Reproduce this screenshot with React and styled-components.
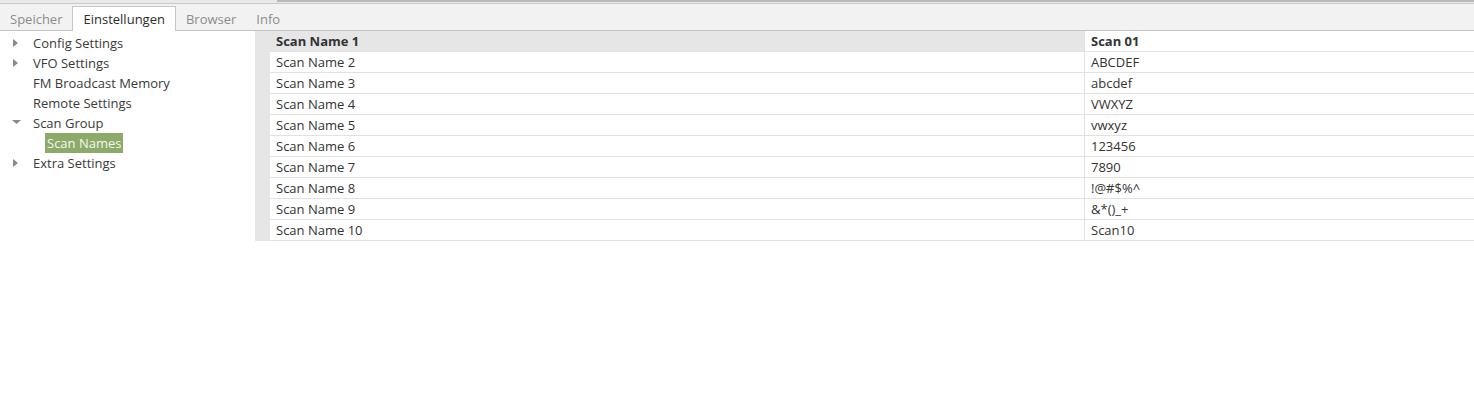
import React from 'react';
import styled, { createGlobalStyle } from 'styled-components';

const GlobalStyle = createGlobalStyle`
  html, body {
    margin: 0;
    padding: 0;
    background: #ffffff;
  }
  body {
    font-family: 'Open Sans', 'Liberation Sans', sans-serif;
    font-size: 13px;
    color: #3c3c3c;
  }
`;

const tabs = ['Speicher', 'Einstellungen', 'Browser', 'Info'];

const tree = [
  { label: 'Config Settings', arrow: 'right' },
  { label: 'VFO Settings', arrow: 'right' },
  { label: 'FM Broadcast Memory' },
  { label: 'Remote Settings' },
  { label: 'Scan Group', arrow: 'down' },
  { label: 'Scan Names', child: true, selected: true },
  { label: 'Extra Settings', arrow: 'right' },
];

const rows = [
  ['Scan Name 1', 'Scan 01'],
  ['Scan Name 2', 'ABCDEF'],
  ['Scan Name 3', 'abcdef'],
  ['Scan Name 4', 'VWXYZ'],
  ['Scan Name 5', 'vwxyz'],
  ['Scan Name 6', '123456'],
  ['Scan Name 7', '7890'],
  ['Scan Name 8', '!@#$%^'],
  ['Scan Name 9', '&*()_+'],
  ['Scan Name 10', 'Scan10'],
];

const Arrow = ({ dir }) => (
  <StArrow>
    {dir === 'right' && (
      <svg width='8' height='10' viewBox='0 0 8 10'>
        <path d='M1 1 L6 5 L1 9 Z' fill='#8a8a8a' />
      </svg>
    )}
    {dir === 'down' && (
      <svg width='10' height='8' viewBox='0 0 10 8'>
        <path d='M0 1 L9 1 L4.5 5 Z' fill='#8a8a8a' />
      </svg>
    )}
  </StArrow>
);

const App = () => {
  return (
    <>
      <GlobalStyle />
      <StWindow>
        <StTopStrip>
          <StStripHandle />
        </StTopStrip>
        <StTabBar>
          {tabs.map((t) => (
            <StTab key={t} $active={t === 'Einstellungen'}>
              {t}
            </StTab>
          ))}
        </StTabBar>
        <StBody>
          <StTree>
            {tree.map((item) => (
              <StTreeRow key={item.label} $child={item.child}>
                {!item.child && <Arrow dir={item.arrow} />}
                <StTreeLabel $selected={item.selected}>{item.label}</StTreeLabel>
              </StTreeRow>
            ))}
          </StTree>
          <StTable>
            {rows.map(([name, value], i) => (
              <StRow key={name}>
                <StRowHeader />
                <StCell $current={i === 0} $bold={i === 0} $width='814px'>
                  {name}
                </StCell>
                <StCell $bold={i === 0} $divider>
                  {value}
                </StCell>
              </StRow>
            ))}
          </StTable>
        </StBody>
      </StWindow>
    </>
  );
};

export default App;

const StWindow = styled.div`
  width: 1474px;
  height: 405px;
  background: #ffffff;
`;

const StTopStrip = styled.div`
  height: 3px;
  background: #e9e9e9;
  display: flex;
  justify-content: flex-end;
`;

const StStripHandle = styled.div`
  width: 1197px;
  height: 2px;
  background: #b9b9b9;
`;

const StTabBar = styled.div`
  height: 26px;
  display: flex;
  align-items: flex-end;
  background: #f2f2f2;
  border-top: 1px solid #c9c9c9;
  border-bottom: 1px solid #c2c2c2;
`;

const StTab = styled.div`
  height: ${({ $active }) => ($active ? '25px' : '24px')};
  margin-bottom: ${({ $active }) => ($active ? '-1px' : '0')};
  padding: 0 ${({ $active }) => ($active ? '10px' : '9px')};
  display: flex;
  align-items: center;
  box-sizing: border-box;
  color: ${({ $active }) => ($active ? '#2e2e2e' : '#8c8c8c')};
  background: ${({ $active }) => ($active ? '#ffffff' : 'transparent')};
  border: 1px solid ${({ $active }) => ($active ? '#c6c6c6' : 'transparent')};
  border-bottom: none;
`;

const StBody = styled.div`
  display: flex;
`;

const StTree = styled.div`
  width: 255px;
  padding-top: 2px;
`;

const StTreeRow = styled.div`
  height: 20px;
  display: flex;
  align-items: center;
  padding-left: ${({ $child }) => ($child ? '45px' : '10px')};
`;

const StArrow = styled.span`
  width: 23px;
  display: flex;
  align-items: center;
  padding-left: 2px;
  box-sizing: border-box;
`;

const StTreeLabel = styled.span`
  line-height: 20px;
  padding: 0 ${({ $selected }) => ($selected ? '2px' : '0')};
  color: ${({ $selected }) => ($selected ? '#f4f7ef' : '#3a3a3a')};
  background: ${({ $selected }) => ($selected ? '#8cab68' : 'transparent')};
`;

const StTable = styled.div`
  flex: 1;
`;

const StRow = styled.div`
  display: flex;
  height: 21px;
  box-sizing: border-box;
  border-bottom: 1px solid #e2e2e2;
`;

const StRowHeader = styled.div`
  width: 15px;
  flex: none;
  background: #e6e6e6;
  margin-bottom: -1px;
`;

const StCell = styled.div`
  width: ${({ $width }) => $width || 'auto'};
  flex: ${({ $width }) => ($width ? 'none' : '1')};
  padding-left: 6px;
  box-sizing: border-box;
  display: flex;
  align-items: center;
  font-weight: ${({ $bold }) => ($bold ? 700 : 400)};
  color: #333333;
  background: ${({ $current }) => ($current ? '#e6e6e6' : 'transparent')};
  border-left: ${({ $divider }) => ($divider ? '1px solid #e2e2e2' : 'none')};
`;
